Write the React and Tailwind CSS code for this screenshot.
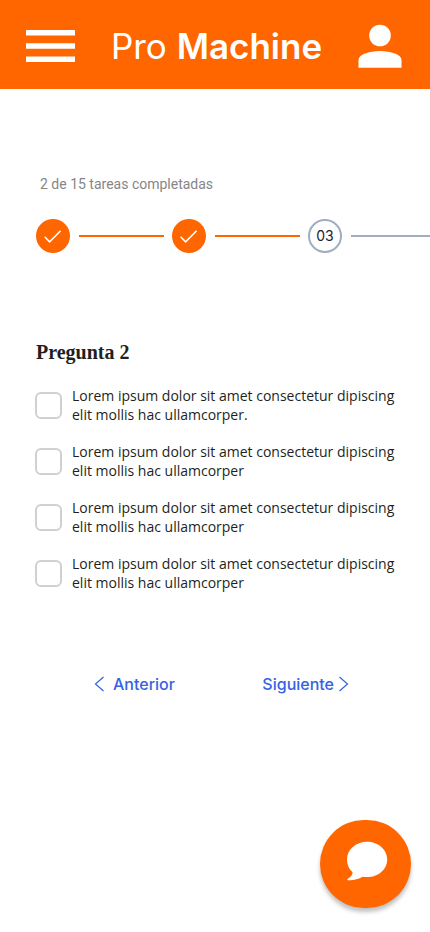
import React from "react";

const STEPS = [
  { id: "01", done: true },
  { id: "02", done: true },
  { id: "03", done: false },
];

const OPTIONS = [
  "Lorem ipsum dolor sit amet consectetur dipiscing elit mollis hac ullamcorper.",
  "Lorem ipsum dolor sit amet consectetur dipiscing elit mollis hac ullamcorper",
  "Lorem ipsum dolor sit amet consectetur dipiscing elit mollis hac ullamcorper",
  "Lorem ipsum dolor sit amet consectetur dipiscing elit mollis hac ullamcorper",
];

function Header() {
  return (
    <header className="flex h-[89px] items-center justify-between bg-[#ff6600] pt-0.5 pl-[26px] pr-7 text-white">
      <button type="button" aria-label="Menú">
        <svg className="block h-8 w-[49px]" viewBox="0 0 49 32" fill="currentColor">
          <path d="M0 0h49v5.4H0zM0 13.3h49v5.4H0zM0 26.6h49V32H0z" />
        </svg>
      </button>
      <h1 className="font-['Inter',sans-serif] text-[35px] leading-10 font-normal">
        Pro <span className="font-semibold">Machine</span>
      </h1>
      <button type="button" aria-label="Perfil">
        <svg className="block h-11 w-11" viewBox="0 0 44 44" fill="currentColor">
          <circle cx="22" cy="11.5" r="10.8" />
          <path d="M.5 43.7v-7.6C.5 30.5 11 27 22 27s21.500 3.500 21.500 9.100v7.600z" />
        </svg>
      </button>
    </header>
  );
}

function Step({ step }) {
  return (
    <li className="flex shrink-0 items-center gap-[9px]">
      {step.done ? (
        <span className="flex size-[34px] items-center justify-center rounded-full bg-[#ff6600] text-white">
          <svg className="size-[34px]" viewBox="0 0 34 34" fill="none" stroke="currentColor" strokeWidth="1.600">
            <path d="M8.600 17.800l5 5L24.600 11.800" />
          </svg>
        </span>
      ) : (
        <span className="flex size-[34px] items-center justify-center rounded-full border-2 border-[#a0aec0] font-['Inter',sans-serif] text-sm font-normal text-[#1a202c]">
          {step.id}
        </span>
      )}
      <span className={step.done ? "h-0.5 w-[85px] bg-[#ff6600]" : "h-0.5 w-[85px] bg-[#a0aec0]"} />
    </li>
  );
}

export default function App() {
  return (
    <div className="relative min-h-screen bg-white">
      <Header />
      <main>
        <section className="pt-[85px]">
          <p className="pl-10 font-['Roboto',sans-serif] text-sm text-[#868686]">2 de 15 tareas completadas</p>
          <ol className="mt-[25px] flex gap-2 overflow-hidden pl-9">
            {STEPS.map((step) => (
              <Step key={step.id} step={step} />
            ))}
          </ol>
        </section>

        <fieldset className="mt-[87px] pl-[35px] pr-6">
          <legend className="pl-px font-['Liberation_Serif',serif] text-xl leading-6 font-bold text-[#231f20]">
            Pregunta 2
          </legend>
          <div className="mt-[22px] flex flex-col gap-[18px]">
            {OPTIONS.map((text, i) => (
              <label key={i} className="flex items-center gap-[10px] font-['Open_Sans',sans-serif] text-sm leading-[19px] text-[#231f20]">
                <input
                  type="checkbox"
                  className="size-[27px] shrink-0 appearance-none rounded-md border-2 border-[#d0d0d0] bg-white checked:border-[#ff6600] checked:bg-[#ff6600]"
                />
                <span>{text}</span>
              </label>
            ))}
          </div>
        </fieldset>

        <nav className="mt-20 flex justify-between pl-[94px] pr-[81px] font-['Inter',sans-serif] text-base leading-6 font-medium text-[#3562e3]">
          <button type="button" className="flex items-center gap-2">
            <svg className="h-4 w-[11px]" viewBox="0 0 11 16" fill="none" stroke="currentColor" strokeWidth="1.200">
              <path d="M9.500 1L1.500 8l8 7" />
            </svg>
            Anterior
          </button>
          <button type="button" className="flex items-center gap-1">
            Siguiente
            <svg className="h-4 w-[11px]" viewBox="0 0 11 16" fill="none" stroke="currentColor" strokeWidth="1.200">
              <path d="M1.500 1l8 7-8 7" />
            </svg>
          </button>
        </nav>
      </main>

      <button
        type="button"
        aria-label="Abrir chat"
        className="fixed right-[19px] bottom-6 flex h-[88px] w-[91px] items-center justify-center rounded-full bg-[#ff6600] text-white shadow-[0_4px_4px_rgba(0,0,0,0.25)]"
      >
        <svg className="h-[88px] w-[91px]" viewBox="0 0 91 88" fill="currentColor">
          <path d="M47 21.700c11.200 0 20.200 7.900 20.200 17.700S58.200 57.100 47 57.100c-1.500 0-3-.1-4.400-.4-4.200 2.400-9.700 4-14.600 3.500-1-.1-1-.9-.2-1.400 2.600-1.500 4.800-3.700 4.800-6.500-3.600-3.200-5.600-7.800-5.600-12.900 0-9.800 8.800-17.700 20-17.700z" />
        </svg>
      </button>
    </div>
  );
}
